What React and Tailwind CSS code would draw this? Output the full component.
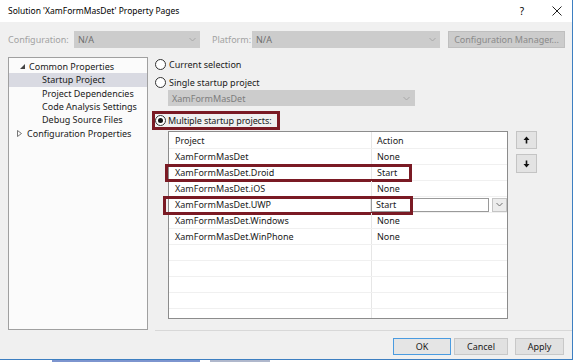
import React from 'react';

const Chevron = ({ color = '#9a9a9a' }) => (
  <svg width="7" height="5" viewBox="0 0 7 5">
    <path d="M0.5 1 L3.5 4 L6.5 1" fill="none" stroke={color} strokeWidth="1" />
  </svg>
);

const Radio = ({ checked }) => (
  <span className="flex h-[11px] w-[11px] shrink-0 items-center justify-center rounded-full border border-[#333] bg-white">
    {checked && <span className="h-[5px] w-[5px] rounded-full bg-[#111]" />}
  </span>
);

const Arrow = ({ down }) => (
  <svg width="7" height="8" viewBox="0 0 7 8" className={down ? 'rotate-180' : ''}>
    <path d="M3.5 0.5 L6.5 4 L4.3 4 L4.3 7.5 L2.7 7.5 L2.7 4 L0.5 4 Z" fill="#111" />
  </svg>
);

const rows = [
  { name: 'XamFormMasDet', action: 'None' },
  { name: 'XamFormMasDet.Droid', action: 'Start', mark: 'droid' },
  { name: 'XamFormMasDet.iOS', action: 'None' },
  { name: 'XamFormMasDet.UWP', action: 'Start', mark: 'uwp' },
  { name: 'XamFormMasDet.Windows', action: 'None' },
  { name: 'XamFormMasDet.WinPhone', action: 'None' },
];

const treeItems = [
  { label: 'Common Properties', icon: 'open', indent: 'pl-[11px]' },
  { label: 'Startup Project', indent: 'pl-[33px]', selected: true },
  { label: 'Project Dependencies', indent: 'pl-[33px]' },
  { label: 'Code Analysis Settings', indent: 'pl-[33px]' },
  { label: 'Debug Source Files', indent: 'pl-[33px]' },
  { label: 'Configuration Properties', icon: 'closed', indent: 'pl-[8px]' },
];

export default function App() {
  return (
    <div className="relative h-[363px] w-[575px] overflow-hidden bg-white font-['Noto_Sans',sans-serif] text-[9px] leading-none whitespace-nowrap text-[#1a1a1a]">
      <div className="flex h-[360px] w-[573px] flex-col border-r border-b border-[#3d7fc1] bg-[#f0f0f0]">
        {/* title bar */}
        <div className="flex h-[22px] items-center bg-white pl-[8px] text-[8.5px] text-black">
          <span>Solution 'XamFormMasDet' Property Pages</span>
          <span className="ml-auto mr-[28px] text-[10px]">?</span>
          <svg width="10" height="10" viewBox="0 0 10 10" className="mr-[10px]">
            <path d="M0.5 0.5 L9.5 9.5 M9.5 0.5 L0.5 9.5" stroke="#222" strokeWidth="1" />
          </svg>
        </div>

        {/* configuration row */}
        <div className="mt-[9px] flex h-[17px] items-center pl-[8px] text-[#a2a2a2]">
          <span className="w-[66px]">Configuration:</span>
          <div className="flex h-[17px] w-[126px] items-center justify-between bg-[#cccccc] pl-[4px] pr-[4px] text-[#6e6e6e]">
            <span>N/A</span>
            <Chevron color="#a8a8a8" />
          </div>
          <span className="ml-[12px] w-[40px]">Platform:</span>
          <div className="flex h-[17px] w-[188px] items-center justify-between bg-[#cccccc] pl-[4px] pr-[4px] text-[#6e6e6e]">
            <span>N/A</span>
            <Chevron color="#a8a8a8" />
          </div>
          <div className="ml-[8px] flex h-[17px] w-[117px] items-center justify-center border border-[#bfbfbf] bg-[#cccccc] text-[#8a8a8a]">
            Configuration Manager...
          </div>
        </div>

        {/* main */}
        <div className="mt-[9px] flex pl-[8px]">
          <div className="h-[273px] w-[140px] border border-[#a0a0a0] bg-[#fbfbfb] pt-[2px]">
            {treeItems.map((item) => (
              <div
                key={item.label}
                className={`flex h-[13.3px] items-center ${item.indent} ${item.selected ? 'bg-[#d9dae2]' : ''}`}
              >
                {item.icon === 'open' && (
                  <svg width="5" height="5" viewBox="0 0 5 5" className="mr-[4px]">
                    <path d="M5 0 L5 5 L0 5 Z" fill="#444" />
                  </svg>
                )}
                {item.icon === 'closed' && (
                  <svg width="5" height="7" viewBox="0 0 5 7" className="mr-[5px]">
                    <path d="M0.5 0.5 L4.5 3.5 L0.5 6.5 Z" fill="none" stroke="#555" strokeWidth="0.8" />
                  </svg>
                )}
                <span>{item.label}</span>
              </div>
            ))}
          </div>

          <div className="ml-[5px] flex flex-col">
            <div className="flex h-[14px] items-center gap-[3px] pl-[2px]">
              <Radio />
              <span>Current selection</span>
            </div>
            <div className="mt-[4px] flex h-[14px] items-center gap-[3px] pl-[2px]">
              <Radio />
              <span>Single startup project</span>
            </div>
            <div className="ml-[15px] mt-[1px] flex h-[16px] w-[247px] items-center justify-between bg-[#cccccc] pl-[4px] pr-[5px] text-[#7d7d7d]">
              <span>XamFormMasDet</span>
              <Chevron color="#a8a8a8" />
            </div>
            <div className="-ml-[1px] mt-[5px] flex h-[19px] w-[128px] items-center gap-[2px] border-[3px] border-[#7a1a24]">
              <Radio checked />
              <span className="tracking-[-0.1px]">Multiple startup projects:</span>
            </div>

            <div className="mt-[1px] flex">
              <div className="ml-[15px] flex h-[188px] w-[340px] flex-col border border-[#8c8c8c] bg-white">
                <div className="flex h-[17px] border-b border-[#f0f0f0]">
                  <div className="flex w-[203px] items-center border-r border-[#e6e6e6] pl-[6px]">Project</div>
                  <div className="flex flex-1 items-center pl-[5px]">Action</div>
                </div>
                {rows.map((r) => (
                  <div key={r.name} className="relative flex h-[16px] border-b border-[#f0f0f0]">
                    {r.mark === 'droid' && (
                      <span className="absolute -left-[4px] -top-[1px] h-[18px] w-[247px] border-[3px] border-[#7a1a24]" />
                    )}
                    {r.mark === 'uwp' && (
                      <span className="absolute -left-[6px] -top-[1px] h-[19px] w-[250px] border-[3px] border-[#7a1a24]" />
                    )}
                    <div className="flex w-[203px] items-center border-r border-[#e6e6e6] pl-[6px]">{r.name}</div>
                    {r.mark === 'uwp' ? (
                      <div className="flex flex-1 items-center">
                        <div className="flex h-[14px] w-[118px] items-center border border-[#9a9a9a] bg-white pl-[4px]">
                          {r.action}
                        </div>
                        <div className="ml-[3px] flex h-[14px] w-[15px] items-center justify-center border border-[#c4c4c4] bg-[#ececec]">
                          <Chevron color="#707070" />
                        </div>
                      </div>
                    ) : (
                      <div className="flex flex-1 items-center pl-[5px]">{r.action}</div>
                    )}
                  </div>
                ))}
                <div className="flex flex-1 flex-col overflow-hidden">
                  {[0, 1, 2, 3, 4].map((i) => (
                    <div key={i} className="flex h-[16px] shrink-0 border-b border-[#f0f0f0]">
                      <div className="w-[203px] border-r border-[#e6e6e6]" />
                    </div>
                  ))}
                </div>
              </div>

              <div className="ml-[8px] flex flex-col">
                <div className="flex h-[18px] w-[21px] items-center justify-center border border-[#c4c4c4] bg-[#e3e3e3]">
                  <Arrow />
                </div>
                <div className="mt-[5px] flex h-[19px] w-[21px] items-center justify-center border border-[#c4c4c4] bg-[#e3e3e3]">
                  <Arrow down />
                </div>
              </div>
            </div>
          </div>
        </div>

        {/* footer */}
        <div className="ml-[155px] border-t border-[#d8d8d8]" />
        <div className="mt-[7px] flex justify-end pr-[8px]">
          <div className="flex h-[17px] w-[58px] items-center justify-center border border-[#4a9be0] bg-[#e5e5e5]">OK</div>
          <div className="ml-[3px] flex h-[17px] w-[54px] items-center justify-center border border-[#c8c8c8] bg-[#e1e1e1]">Cancel</div>
          <div className="ml-[7px] flex h-[17px] w-[49px] items-center justify-center border border-[#c8c8c8] bg-[#e1e1e1]">Apply</div>
        </div>
      </div>
      <div className="flex h-[3px] items-start pl-[52px]">
        <span className="h-[2px] w-[148px] bg-[#7d95cf]" />
        <span className="ml-[10px] h-[2px] w-[60px] bg-[#b0b8cc]" />
      </div>
    </div>
  );
}
